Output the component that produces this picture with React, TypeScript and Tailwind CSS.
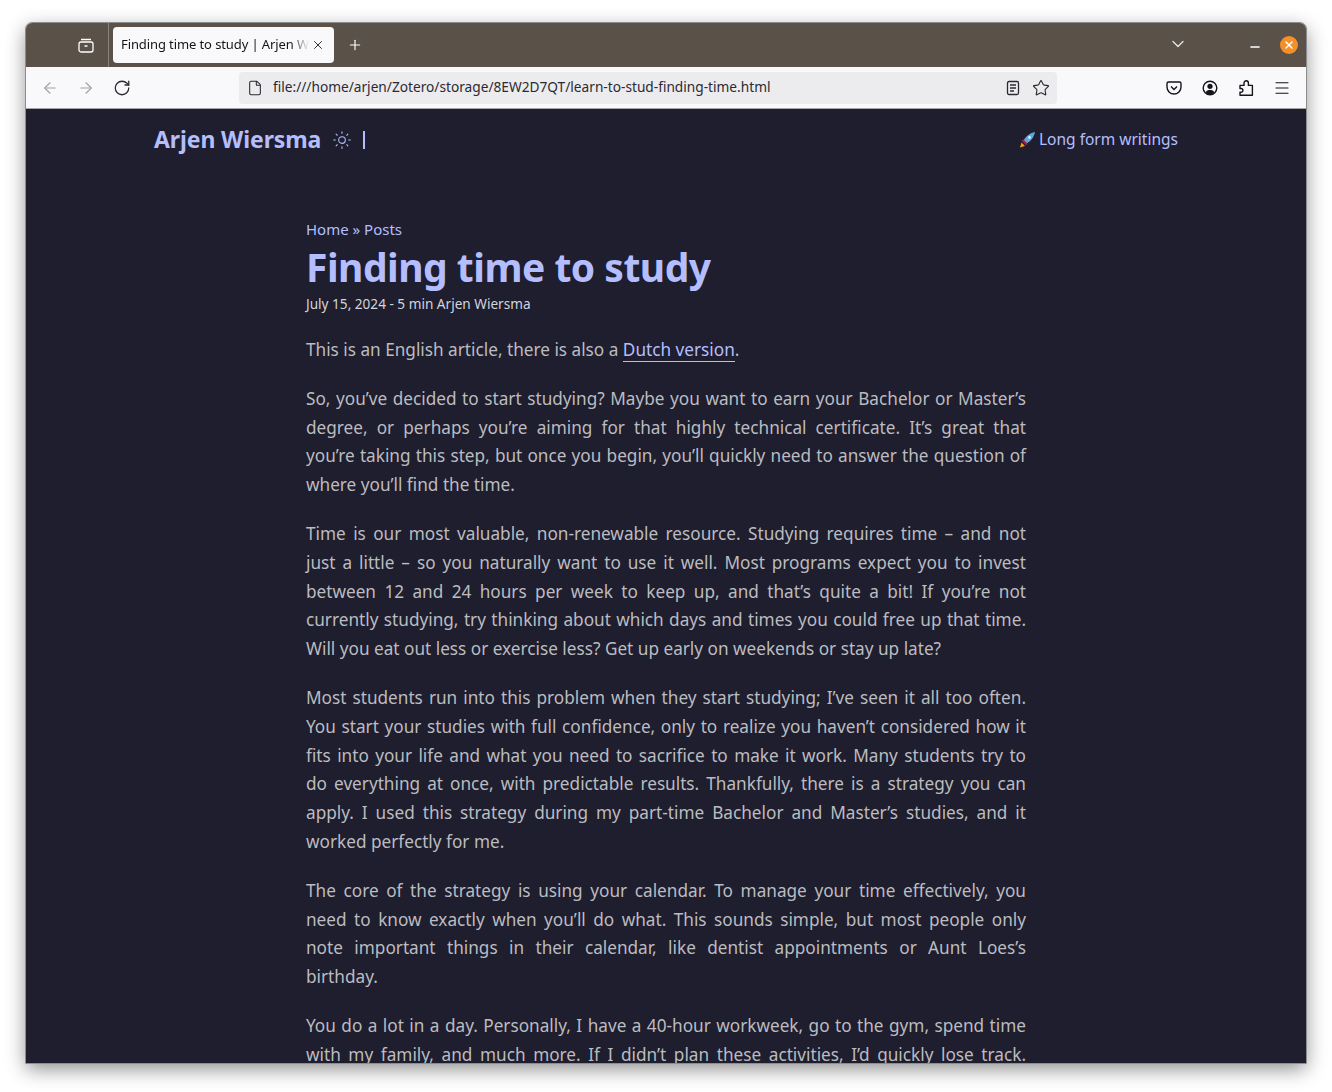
import { ArrowLeft, ArrowRight, ChevronDown, File, Menu, Minus, Plus, RotateCw, Star, Sun, X } from 'lucide-react';

const paragraphs = [
  [
    'So, you’ve decided to start studying? Maybe you want to earn your Bachelor or Master’s',
    'degree, or perhaps you’re aiming for that highly technical certificate. It’s great that',
    'you’re taking this step, but once you begin, you’ll quickly need to answer the question of',
    'where you’ll find the time.',
  ],
  [
    'Time is our most valuable, non-renewable resource. Studying requires time – and not',
    'just a little – so you naturally want to use it well. Most programs expect you to invest',
    'between 12 and 24 hours per week to keep up, and that’s quite a bit! If you’re not',
    'currently studying, try thinking about which days and times you could free up that time.',
    'Will you eat out less or exercise less? Get up early on weekends or stay up late?',
  ],
  [
    'Most students run into this problem when they start studying; I’ve seen it all too often.',
    'You start your studies with full confidence, only to realize you haven’t considered how it',
    'fits into your life and what you need to sacrifice to make it work. Many students try to',
    'do everything at once, with predictable results. Thankfully, there is a strategy you can',
    'apply. I used this strategy during my part-time Bachelor and Master’s studies, and it',
    'worked perfectly for me.',
  ],
  [
    'The core of the strategy is using your calendar. To manage your time effectively, you',
    'need to know exactly when you’ll do what. This sounds simple, but most people only',
    'note important things in their calendar, like dentist appointments or Aunt Loes’s',
    'birthday.',
  ],
  [
    'You do a lot in a day. Personally, I have a 40-hour workweek, go to the gym, spend time',
    'with my family, and much more. If I didn’t plan these activities, I’d quickly lose track.',
  ],
];

function Rocket() {
  return (
    <svg viewBox="0 0 16 16" className="w-4 h-4 shrink-0">
      <path d="M1 15.500l1.500-5 3.500 3.500z" fill="#f59e0b" />
      <path d="M2.500 8.500L6 7l3 3-1.500 3.500z" fill="#b91c3c" />
      <path d="M5 8C7 4 11 1 16 0c-1 5-4 9-8 11z" fill="#5aa9e6" />
      <circle cx="10.500" cy="5.500" r="1.400" fill="#dbeafe" />
    </svg>
  );
}

function Browser() {
  return (
    <div className="font-['Noto_Sans',sans-serif]">
      <div className="h-[44px] bg-[#5a5149] flex items-center relative">
        <div className="w-[83px] h-full border-r border-[#8a837c] flex items-center justify-end pr-[14px]">
          <svg viewBox="0 0 16 16" className="w-4 h-4" fill="none" stroke="#fff" strokeWidth="1.300">
            <rect x="1" y="5" width="14" height="10" rx="2" />
            <path d="M3 2.500h10M6.500 9h3" />
          </svg>
        </div>
        <div className="ml-[4px] w-[221px] h-[36px] bg-[#f9f9fb] rounded flex items-center pl-2 pr-[9px] -mt-[1px]">
          <span className="text-[13px] tracking-[-0.1px] text-[#15141a] whitespace-nowrap overflow-hidden w-[188px] [mask-image:linear-gradient(to_right,black_170px,transparent_188px)]">
            Finding time to study | Arjen Wiersma
          </span>
          <X className="w-[14px] h-[14px] ml-auto text-[#15141a]" strokeWidth={1.500} />
        </div>
        <Plus className="w-[16px] h-[16px] ml-[13px] text-white" strokeWidth={1.700} />
        <ChevronDown className="absolute left-[1142px] top-[11px] w-[20px] h-[20px] text-[#e8e6e3]" strokeWidth={1.500} />
        <Minus className="absolute left-[1222px] top-[17px] w-[14px] h-[14px] text-white" strokeWidth={2.500} />
        <div className="absolute left-[1254px] top-[13px] w-[18px] h-[18px] rounded-full bg-[#f58f28] flex items-center justify-center">
          <X className="w-3 h-3 text-white" strokeWidth={3} />
        </div>
      </div>
      <div className="h-[42px] bg-[#f9f9fb] border-b border-[#a9a7a3] flex items-center text-[#5b5b66]">
        <ArrowLeft className="w-[18px] h-[18px] ml-[15px] text-[#a0a0a5]" strokeWidth={1.500} />
        <ArrowRight className="w-[18px] h-[18px] ml-[18px] text-[#a0a0a5]" strokeWidth={1.500} />
        <RotateCw className="w-[18px] h-[18px] ml-[18px] text-[#2b2a33]" strokeWidth={1.700} />
        <div className="ml-[108px] w-[818px] h-[32px] bg-[#ececee] rounded flex items-center px-2">
          <File className="w-4 h-4 text-[#2b2a33]" strokeWidth={1.600} />
          <span className="ml-[10px] text-[13.700px] text-[#2b2a33]">
            file:///home/arjen/Zotero/storage/8EW2D7QT/learn-to-stud-finding-time.html
          </span>
          <svg viewBox="0 0 16 16" className="w-4 h-4 ml-auto" fill="none" stroke="#2b2a33" strokeWidth="1.300">
            <rect x="2.500" y="1.500" width="11" height="13" rx="1.500" />
            <path d="M5 5h6M5 8h6M5 11h4" />
          </svg>
          <Star className="w-[18px] h-[18px] ml-[11px] -mr-[1px] text-[#2b2a33]" strokeWidth={1.500} />
        </div>
        <svg viewBox="0 0 16 16" className="w-4 h-4 ml-[109px]" fill="none" stroke="#15141a" strokeWidth="1.400">
          <path d="M2.500 2h11A1.500 1.500 0 0 1 15 3.500V7a7 7 0 0 1-14 0V3.500A1.500 1.500 0 0 1 2.500 2z" />
          <path d="M5 6.500l3 3 3-3" />
        </svg>
        <svg viewBox="0 0 16 16" className="w-4 h-4 ml-5">
          <circle cx="8" cy="8" r="6.800" fill="none" stroke="#15141a" strokeWidth="1.400" />
          <circle cx="8" cy="6.300" r="2.600" fill="#15141a" />
          <path d="M3.600 12.200C4.500 10.500 6 10 8 10s3.500.5 4.400 2.200L10.500 14h-5z" fill="#15141a" />
        </svg>
        <svg viewBox="0 0 16 16" className="w-4 h-4 ml-5" fill="none" stroke="#15141a" strokeWidth="1.400" strokeLinejoin="round">
          <path d="M2 15.200V12.300h1a1.900 1.900 0 0 0 0-3.800H2V5.400h4V3a2.200 2.200 0 0 1 4.400 0v2.400h4v9.800z" />
        </svg>
        <Menu className="w-[18px] h-[18px] ml-[19px] text-[#15141a]" strokeWidth={1.500} />
      </div>
    </div>
  );
}

export default function App() {
  return (
    <div className="h-[1092px] bg-white pt-[23px] pl-[26px] overflow-hidden">
      <div className="w-[1280px] h-[1040px] rounded-t-[6px] overflow-hidden flex flex-col shadow-[0_6px_20px_rgba(0,0,0,0.45)] outline outline-1 outline-[#8d8d8d]">
        <Browser />
        <div className="flex-1 overflow-hidden bg-[#1e1e2e] font-['Noto_Sans',sans-serif]">
          <nav className="w-[1024px] mx-auto h-[60px] pt-px flex items-center justify-between text-[#b4befe]">
            <div className="flex items-center">
              <span className="text-[23px] tracking-[-0.1px] font-bold leading-none">Arjen Wiersma</span>
              <Sun className="w-[20px] h-[20px] ml-[11px]" strokeWidth={1.300} />
              <span className="ml-[11px] w-[1.500px] h-[18px] bg-[#b4befe]" />
            </div>
            <div className="flex items-center gap-[4px] text-[15.500px]">
              <Rocket />
              <span>Long form writings</span>
            </div>
          </nav>
          <main className="w-[720px] mx-auto pt-[48px]">
            <div className="text-[15px] leading-[24px] text-[#b4befe]">Home » Posts</div>
            <h1 className="text-[39px] tracking-[-0.5px] leading-[48px] mt-[2px] font-bold text-[#b4befe]">Finding time to study</h1>
            <div className="text-[13.600px] leading-[20px] mt-[3px] text-[#d4d4dc]">July 15, 2024 - 5 min Arjen Wiersma</div>
            <p className="mt-[22px] text-[17.200px] leading-[28.800px] text-[#bcbcc0]">
              This is an English article, there is also a{' '}
              <a className="text-[#b4befe] border-b border-[#b4befe]">Dutch version</a>.
            </p>
            {paragraphs.map((lines, i) => (
              <p key={i} className="mt-[20px] text-[17.200px] leading-[28.800px] text-[#bcbcc0]">
                {lines.map((line, j) => (
                  <span
                    key={j}
                    className={j < lines.length - 1 || i === 4 ? 'block text-justify [text-align-last:justify]' : 'block'}
                  >
                    {line}
                  </span>
                ))}
              </p>
            ))}
          </main>
        </div>
      </div>
    </div>
  );
}
